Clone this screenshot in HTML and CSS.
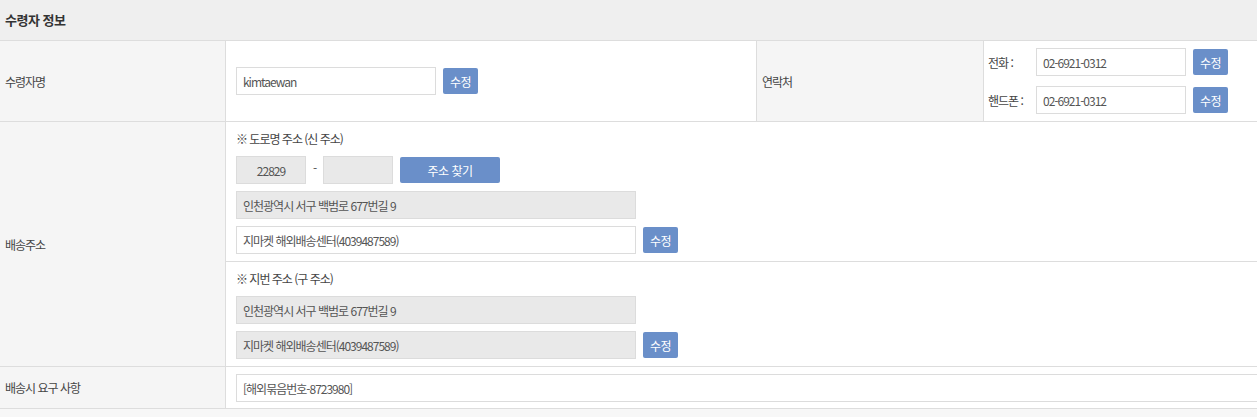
FILE: index.html
```html
<!DOCTYPE html>
<html lang="ko">
<head>
<meta charset="utf-8">
<title>수령자 정보</title>
<link rel="stylesheet" href="styles.css">
</head>
<body>
<div class="section">
  <div class="title">수령자 정보</div>
  <div class="grid">
    <div class="label">수령자명</div>
    <div class="value center">
      <div class="line">
        <input class="field w200" type="text" value="kimtaewan">
        <button class="btn">수정</button>
      </div>
    </div>
    <div class="label">연락처</div>
    <div class="value phones">
      <div class="line">
        <span class="plabel">전화 :</span>
        <input class="field w150" type="text" value="02-6921-0312">
        <button class="btn">수정</button>
      </div>
      <div class="line">
        <span class="plabel">핸드폰 :</span>
        <input class="field w150" type="text" value="02-6921-0312">
        <button class="btn">수정</button>
      </div>
    </div>

    <div class="label">배송주소</div>
    <div class="value span3 addr">
      <div class="sub">
        <div class="note">※ 도로명 주소 (신 주소)</div>
        <div class="line">
          <input class="field post gray" type="text" value="22829" readonly>
          <span class="dash">-</span>
          <input class="field post gray" type="text" value="" readonly>
          <button class="btn wide">주소 찾기</button>
        </div>
        <div class="line">
          <input class="field w400 gray" type="text" value="인천광역시 서구 백범로 677번길 9" readonly>
        </div>
        <div class="line">
          <input class="field w400" type="text" value="지마켓 해외배송센터(4039487589)">
          <button class="btn">수정</button>
        </div>
      </div>
      <div class="sub">
        <div class="note">※ 지번 주소 (구 주소)</div>
        <div class="line">
          <input class="field w400 gray" type="text" value="인천광역시 서구 백범로 677번길 9" readonly>
        </div>
        <div class="line">
          <input class="field w400 gray" type="text" value="지마켓 해외배송센터(4039487589)" readonly>
          <button class="btn">수정</button>
        </div>
      </div>
    </div>

    <div class="label">배송시 요구 사항</div>
    <div class="value span3 req">
      <input class="field full" type="text" value="[해외묶음번호-8723980]">
    </div>
  </div>
</div>
</body>
</html>
```
FILE: styles.css
```css
html, body {
  margin: 0;
  padding: 0;
  overflow: hidden;
  background: #f7f7f7;
}
body {
  font-family: "Noto Sans CJK KR", "Noto Sans", sans-serif;
  font-size: 12px;
  color: #444;
  letter-spacing: -1px;
}
.section {
  width: 100%;
}
.title {
  height: 40px;
  line-height: 40px;
  padding-left: 5px;
  background: #efefef;
  font-size: 13px;
  font-weight: bold;
  color: #333;
  letter-spacing: -0.5px;
}
.grid {
  display: grid;
  grid-template-columns: 225px 530px 226px 1fr;
  gap: 1px;
  background: #dddddd;
  border-top: 1px solid #dddddd;
  border-bottom: 1px solid #dddddd;
}
.label {
  background: #f5f5f5;
  padding-left: 5px;
  display: flex;
  align-items: center;
  color: #444;
}
.value {
  background: #fff;
  padding: 0 10px;
  min-width: 0;
}
.value.center {
  display: flex;
  align-items: center;
}
.span3 {
  grid-column: span 3;
}
.line {
  display: flex;
  align-items: center;
  gap: 7px;
}
.phones {
  padding: 7px 4px;
  display: flex;
  flex-direction: column;
  gap: 10px;
}
.plabel {
  width: 41px;
  flex: none;
}
.field {
  box-sizing: border-box;
  height: 28px;
  border: 1px solid #dcdcdc;
  background: #fff;
  padding: 0 6px;
  font-family: inherit;
  font-size: 12px;
  letter-spacing: -1px;
  color: #555;
  outline: none;
  margin: 0;
}
.field.gray {
  background: #e9e9e9;
}
.w200 { width: 200px; }
.w150 { width: 150px; }
.w400 { width: 400px; }
.post {
  width: 70px;
  text-align: center;
}
.dash {
  width: 3px;
  text-align: center;
  color: #555;
  margin: -6px 0 0;
}
.btn {
  height: 26px;
  width: 35px;
  padding: 0;
  border: none;
  border-radius: 2px;
  background: #6a8fc9;
  color: #fff;
  font-family: inherit;
  font-size: 12px;
  letter-spacing: -0.5px;
  flex: none;
}
.btn.wide {
  width: 100px;
}
.addr {
  padding: 0;
  display: flex;
  flex-direction: column;
  gap: 1px;
  background: #dddddd;
}
.sub {
  background: #fff;
  padding: 7px 10px;
  display: flex;
  flex-direction: column;
  gap: 7px;
}
.note {
  height: 20px;
  line-height: 20px;
  color: #444;
}
.req {
  padding: 7px 0 6px 10px;
  overflow: hidden;
}
.full {
  width: calc(100% + 40px);
}
```
